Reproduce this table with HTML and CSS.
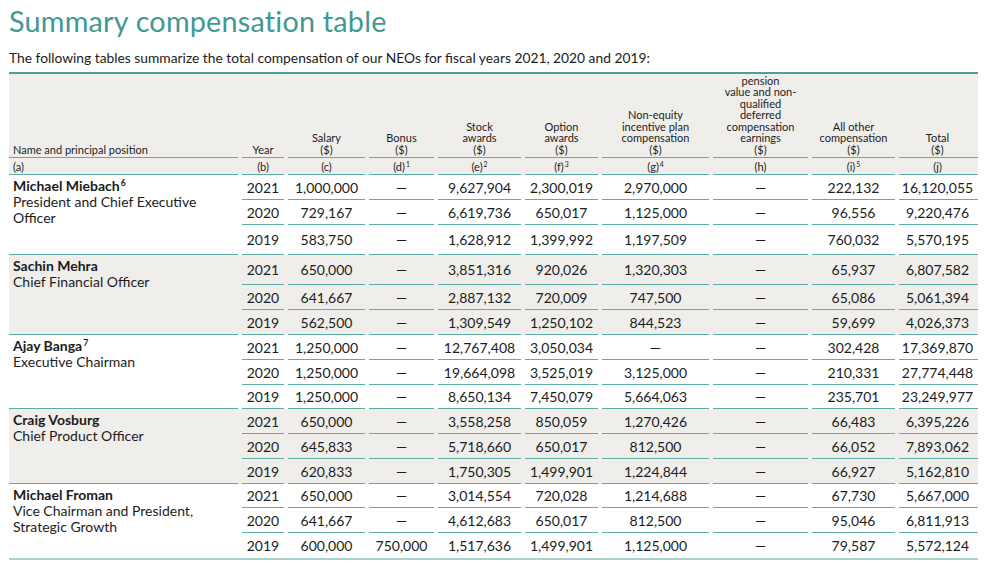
FILE: index.html
```html
<!DOCTYPE html>
<html lang="en">
<head>
<meta charset="utf-8">
<title>Summary compensation table</title>
<link rel="stylesheet" href="styles.css">
</head>
<body>
<div class="page">
  <h1 class="title">Summary compensation table</h1>
  <p class="intro">The following tables summarize the total compensation of our NEOs for fiscal years 2021, 2020 and 2019:</p>
  <table class="comp">
    <colgroup>
      <col class="c-name"><col class="c-year"><col class="c-salary"><col class="c-bonus"><col class="c-stock"><col class="c-option"><col class="c-nonequity"><col class="c-pension"><col class="c-other"><col class="c-total">
    </colgroup>
    <thead>
      <tr class="labels">
        <th class="first"><div class="lab lab-left">Name and principal position</div></th>
        <th><div class="lab">Year</div></th>
        <th><div class="lab">Salary<br>($)</div></th>
        <th><div class="lab">Bonus<br>($)</div></th>
        <th><div class="lab">Stock<br>awards<br>($)</div></th>
        <th><div class="lab">Option<br>awards<br>($)</div></th>
        <th><div class="lab">Non-equity<br>incentive plan<br>compensation<br>($)</div></th>
        <th><div class="lab">pension<br>value and non-<br>qualified<br>deferred<br>compensation<br>earnings<br>($)</div></th>
        <th><div class="lab">All other<br>compensation<br>($)</div></th>
        <th class="last"><div class="lab">Total<br>($)</div></th>
      </tr>
      <tr class="letters">
        <th class="first left">(a)</th>
        <th>(b)</th>
        <th>(c)</th>
        <th>(d)<sup>1</sup></th>
        <th>(e)<sup>2</sup></th>
        <th>(f)<sup>3</sup></th>
        <th>(g)<sup>4</sup></th>
        <th>(h)</th>
        <th>(i)<sup>5</sup></th>
        <th class="last">(j)</th>
      </tr>
    </thead>
    <tbody class="group">
      <tr>
        <td class="first name" rowspan="3"><strong>Michael Miebach<sup>6</sup></strong><br>President and Chief Executive Officer</td>
        <td>2021</td><td>1,000,000</td><td>—</td><td>9,627,904</td><td>2,300,019</td><td>2,970,000</td><td>—</td><td>222,132</td><td class="last">16,120,055</td>
      </tr>
      <tr>
        <td>2020</td><td>729,167</td><td>—</td><td>6,619,736</td><td>650,017</td><td>1,125,000</td><td>—</td><td>96,556</td><td class="last">9,220,476</td>
      </tr>
      <tr class="tall">
        <td>2019</td><td>583,750</td><td>—</td><td>1,628,912</td><td>1,399,992</td><td>1,197,509</td><td>—</td><td>760,032</td><td class="last">5,570,195</td>
      </tr>
    </tbody>
    <tbody class="group alt">
      <tr class="tall">
        <td class="first name" rowspan="3"><strong>Sachin Mehra</strong><br>Chief Financial Officer</td>
        <td>2021</td><td>650,000</td><td>—</td><td>3,851,316</td><td>920,026</td><td>1,320,303</td><td>—</td><td>65,937</td><td class="last">6,807,582</td>
      </tr>
      <tr>
        <td>2020</td><td>641,667</td><td>—</td><td>2,887,132</td><td>720,009</td><td>747,500</td><td>—</td><td>65,086</td><td class="last">5,061,394</td>
      </tr>
      <tr>
        <td>2019</td><td>562,500</td><td>—</td><td>1,309,549</td><td>1,250,102</td><td>844,523</td><td>—</td><td>59,699</td><td class="last">4,026,373</td>
      </tr>
    </tbody>
    <tbody class="group">
      <tr>
        <td class="first name" rowspan="3"><strong>Ajay Banga<sup>7</sup></strong><br>Executive Chairman</td>
        <td>2021</td><td>1,250,000</td><td>—</td><td>12,767,408</td><td>3,050,034</td><td>—</td><td>—</td><td>302,428</td><td class="last">17,369,870</td>
      </tr>
      <tr>
        <td>2020</td><td>1,250,000</td><td>—</td><td>19,664,098</td><td>3,525,019</td><td>3,125,000</td><td>—</td><td>210,331</td><td class="last">27,774,448</td>
      </tr>
      <tr class="short">
        <td>2019</td><td>1,250,000</td><td>—</td><td>8,650,134</td><td>7,450,079</td><td>5,664,063</td><td>—</td><td>235,701</td><td class="last">23,249,977</td>
      </tr>
    </tbody>
    <tbody class="group alt">
      <tr>
        <td class="first name" rowspan="3"><strong>Craig Vosburg</strong><br>Chief Product Officer</td>
        <td>2021</td><td>650,000</td><td>—</td><td>3,558,258</td><td>850,059</td><td>1,270,426</td><td>—</td><td>66,483</td><td class="last">6,395,226</td>
      </tr>
      <tr>
        <td>2020</td><td>645,833</td><td>—</td><td>5,718,660</td><td>650,017</td><td>812,500</td><td>—</td><td>66,052</td><td class="last">7,893,062</td>
      </tr>
      <tr>
        <td>2019</td><td>620,833</td><td>—</td><td>1,750,305</td><td>1,499,901</td><td>1,224,844</td><td>—</td><td>66,927</td><td class="last">5,162,810</td>
      </tr>
    </tbody>
    <tbody class="group final">
      <tr class="short">
        <td class="first name" rowspan="3"><strong>Michael Froman</strong><br>Vice Chairman and President, Strategic Growth</td>
        <td>2021</td><td>650,000</td><td>—</td><td>3,014,554</td><td>720,028</td><td>1,214,688</td><td>—</td><td>67,730</td><td class="last">5,667,000</td>
      </tr>
      <tr>
        <td>2020</td><td>641,667</td><td>—</td><td>4,612,683</td><td>650,017</td><td>812,500</td><td>—</td><td>95,046</td><td class="last">6,811,913</td>
      </tr>
      <tr class="end">
        <td>2019</td><td>600,000</td><td>750,000</td><td>1,517,636</td><td>1,499,901</td><td>1,125,000</td><td>—</td><td>79,587</td><td class="last">5,572,124</td>
      </tr>
    </tbody>
  </table>
</div>
</body>
</html>
```

FILE: styles.css
```css
:root {
  --teal: #3f9993;
  --line: #5eaca6;
  --gray: #efeeeb;
  --ink: #1c1c1c;
}

html, body {
  margin: 0;
  padding: 0;
  background: #ffffff;
}

body {
  font-family: "Lato", "Open Sans", sans-serif;
  color: var(--ink);
}

.page {
  padding: 4px 6px 0 9px;
}

.title {
  margin: 0;
  font-size: 28.8px;
  line-height: 34px;
  font-weight: 400;
  color: var(--teal);
  letter-spacing: 0.2px;
}

.intro {
  margin: 11px 0 0 0;
  font-size: 13.8px;
  line-height: 17px;
  font-weight: 400;
}

.comp {
  margin-top: 6px;
  width: 969px;
  table-layout: fixed;
  border-collapse: separate;
  border-spacing: 0;
  border-top: 2px solid #4aa19b;
  border-bottom: 2px solid #a6d1cd;
}

.c-name { width: 231px; }
.c-year { width: 46px; }
.c-salary { width: 81px; }
.c-bonus { width: 69px; }
.c-stock { width: 87px; }
.c-option { width: 77px; }
.c-nonequity { width: 111px; }
.c-pension { width: 99px; }
.c-other { width: 87px; }
.c-total { width: 81px; }

.comp th,
.comp td {
  padding: 0;
  text-align: center;
  background-image: linear-gradient(var(--line), var(--line));
  background-repeat: no-repeat;
  background-size: calc(100% - 4px) 1px;
  background-position: 50% 100%;
}

.comp .first {
  background-size: calc(100% - 2px) 1px;
  background-position: 0 100%;
}

.comp .last {
  background-size: calc(100% - 2px) 1px;
  background-position: 100% 100%;
}

.comp thead th {
  background-color: var(--gray);
  font-weight: 400;
  font-size: 11px;
  line-height: 11.5px;
}

.labels th {
  height: 84px;
  vertical-align: bottom;
}

.lab {
  padding-bottom: 3px;
}

.lab-left {
  text-align: left;
  padding-left: 4px;
}

.letters th {
  height: 17px;
  vertical-align: middle;
}

.letters .left {
  text-align: left;
  padding-left: 4px;
}

sup {
  font-size: 0.62em;
  line-height: 0;
  vertical-align: 0.55em;
  margin-left: 1px;
}

.comp tbody td {
  height: 25px;
  font-size: 14px;
  line-height: 16px;
  vertical-align: middle;
}

.comp tbody tr.tall td {
  height: 30px;
}

.comp tbody tr.short td {
  height: 24px;
}

.comp tbody td.name {
  text-align: left;
  vertical-align: top;
  padding: 3px 8px 0 4px;
  font-size: 14px;
  line-height: 16px;
}

.name strong {
  font-weight: 700;
}

.group.alt td {
  background-color: var(--gray);
}

.group.final tr.end td,
.group.final td.name {
  background-image: none;
}
```
